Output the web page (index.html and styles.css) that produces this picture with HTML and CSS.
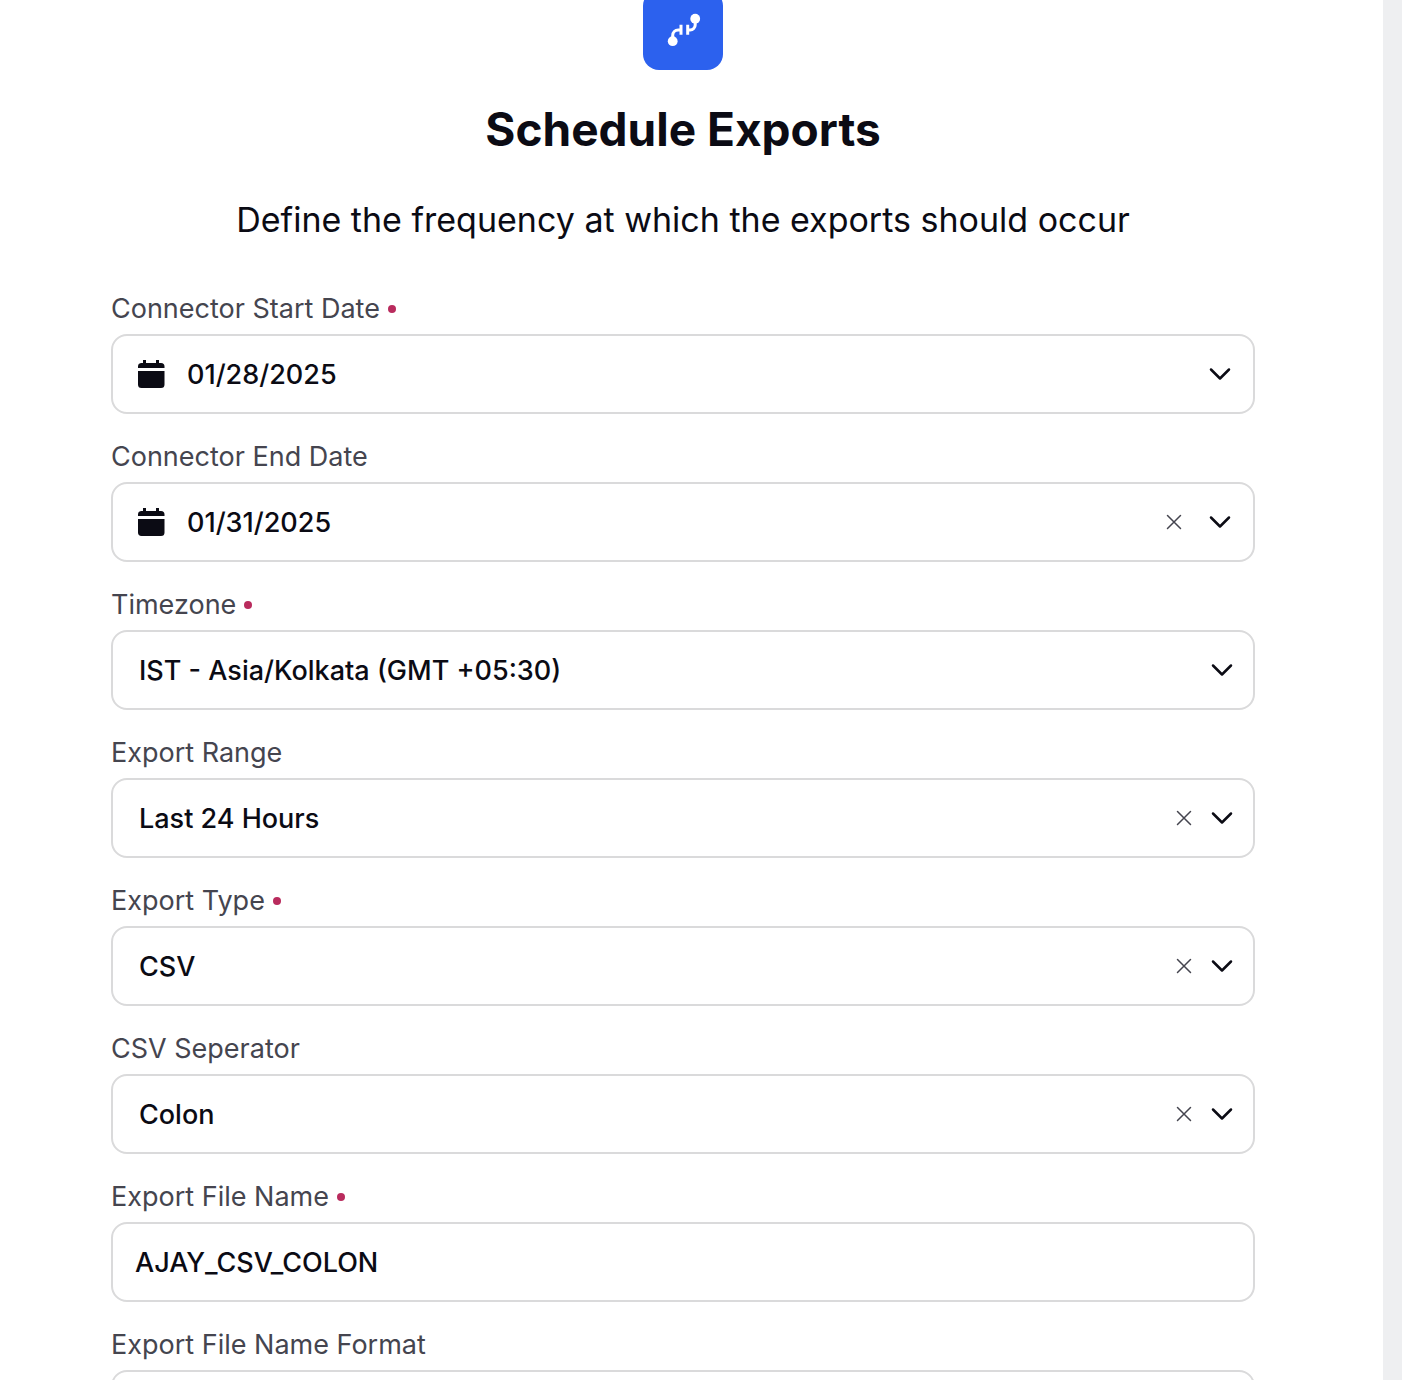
FILE: index.html
```html
<!DOCTYPE html>
<html lang="en">
<head>
  <meta charset="UTF-8" />
  <title>Schedule Exports</title>
  <meta name="viewport" content="width=device-width,initial-scale=1" />
  <link rel="stylesheet" href="styles.css">
</head>
<body>
  <svg class="sprite" aria-hidden="true">
    <symbol id="calendar" viewBox="0 0 28 28">
      <path d="M6 0h3v3h10V0h3v3h2a3.500 3.500 0 0 1 3.500 3.500V8H1V6.500A3.500 3.500 0 0 1 4 3h2z" />
      <path d="M1 11h26.500v13.500A3.500 3.500 0 0 1 24 28H4.500A3.500 3.500 0 0 1 1 24.500z" />
    </symbol>
    <symbol id="chevron" viewBox="0 0 24 24">
      <path d="M3 7.500l9 9 9-9" />
    </symbol>
    <symbol id="close" viewBox="0 0 16 16">
      <path d="M1.500 1.500l13 13M14.500 1.500l-13 13" />
    </symbol>
  </svg>

  <main class="panel">
    <header class="header">
      <svg class="logo" viewBox="0 0 80 80" aria-hidden="true">
        <rect width="80" height="80" rx="16" fill="#2c61ee" />
        <g fill="none" stroke="#fff" stroke-width="3">
          <path d="M29.700 51v-5.500a5.500 5.500 0 0 1 5.500-5.500H38M38 34.700v10M44.700 34.700v10M44.700 40h2.500a5 5 0 0 0 5-5V29" />
        </g>
        <circle cx="29.700" cy="51.200" r="4.900" fill="#fff" />
        <circle cx="52.200" cy="28.700" r="4.900" fill="#fff" />
      </svg>
      <h1>Schedule Exports</h1>
      <p>Define the frequency at which the exports should occur</p>
    </header>

    <form class="form">
      <div class="field">
        <label class="required" for="startDate">Connector Start Date</label>
        <div class="control date">
          <svg class="calendar" aria-hidden="true"><use href="#calendar" /></svg>
          <input type="text" id="startDate" value="01/28/2025">
          <button type="button" class="open" aria-label="Open calendar"><svg class="chevron"><use href="#chevron" /></svg></button>
        </div>
      </div>

      <div class="field">
        <label for="endDate">Connector End Date</label>
        <div class="control date">
          <svg class="calendar" aria-hidden="true"><use href="#calendar" /></svg>
          <input type="text" id="endDate" value="01/31/2025">
          <button type="button" class="clear" aria-label="Clear"><svg class="close"><use href="#close" /></svg></button>
          <button type="button" class="open" aria-label="Open calendar"><svg class="chevron"><use href="#chevron" /></svg></button>
        </div>
      </div>

      <div class="field">
        <label class="required" for="timezone">Timezone</label>
        <div class="control dropdown">
          <select id="timezone"><option>IST - Asia/Kolkata (GMT +05:30)</option></select>
          <svg class="chevron" aria-hidden="true"><use href="#chevron" /></svg>
        </div>
      </div>

      <div class="field">
        <label for="range">Export Range</label>
        <div class="control dropdown">
          <select id="range"><option>Last 24 Hours</option></select>
          <button type="button" class="clear" aria-label="Clear"><svg class="close"><use href="#close" /></svg></button>
          <svg class="chevron" aria-hidden="true"><use href="#chevron" /></svg>
        </div>
      </div>

      <div class="field">
        <label class="required" for="type">Export Type</label>
        <div class="control dropdown">
          <select id="type"><option>CSV</option></select>
          <button type="button" class="clear" aria-label="Clear"><svg class="close"><use href="#close" /></svg></button>
          <svg class="chevron" aria-hidden="true"><use href="#chevron" /></svg>
        </div>
      </div>

      <div class="field">
        <label for="separator">CSV Seperator</label>
        <div class="control dropdown">
          <select id="separator"><option>Colon</option></select>
          <button type="button" class="clear" aria-label="Clear"><svg class="close"><use href="#close" /></svg></button>
          <svg class="chevron" aria-hidden="true"><use href="#chevron" /></svg>
        </div>
      </div>

      <div class="field">
        <label class="required" for="fileName">Export File Name</label>
        <div class="control">
          <input type="text" id="fileName" value="AJAY_CSV_COLON">
        </div>
      </div>

      <div class="field">
        <label for="fileFormat">Export File Name Format</label>
        <div class="control">
          <input type="text" id="fileFormat">
        </div>
      </div>
    </form>
  </main>
</body>
</html>
```

FILE: styles.css
```css
* {
  box-sizing: border-box;
}
html {
  height: 100%;
  overflow: hidden;
}
body {
  margin: 0;
  height: 100%;
  overflow: hidden;
  padding-right: 19px;
  background: #eeeff1;
  color: #0b0b14;
  font-family: Inter, "Liberation Sans", sans-serif;
  font-size: 27px;
}
.sprite {
  display: none;
}
.panel {
  height: 100%;
  overflow: hidden;
  padding: 0 128px 0 111px;
  background: #fff;
}
.header {
  display: flex;
  flex-direction: column;
  align-items: center;
  /* the top of the logo is scrolled out of view */
  margin-top: -10px;
  text-align: center;
}
.logo {
  width: 80px;
  height: 80px;
}
h1 {
  margin: 28px 0 0;
  font-size: 46px;
  font-weight: 700;
  line-height: 62px;
}
.header p {
  margin: 34px 0 0;
  font-size: 34px;
  line-height: 52px;
}
.form {
  display: flex;
  flex-direction: column;
  gap: 24px;
  margin-top: 44px;
}
.field {
  display: flex;
  flex-direction: column;
  gap: 6px;
}
label {
  display: flex;
  align-items: center;
  gap: 8px;
  line-height: 38px;
  color: #45454f;
}
.required::after {
  content: "";
  width: 8px;
  height: 8px;
  border-radius: 50%;
  background: #b92b5d;
}
.control {
  display: flex;
  align-items: center;
  height: 80px;
  padding: 0 22px;
  border: 2px solid #dadadb;
  border-radius: 16px;
}
.date {
  padding: 0 21px 0 24px;
}
.dropdown {
  padding: 0 19px 0 26px;
}
input, select {
  flex: 1;
  min-width: 0;
  height: 100%;
  padding: 0;
  border: 0;
  outline: 0;
  appearance: none;
  background: none;
  color: inherit;
  font: inherit;
  font-weight: 500;
}
button {
  display: flex;
  padding: 0;
  border: 0;
  background: none;
  color: inherit;
}
.calendar {
  width: 28px;
  height: 28px;
  margin-right: 22px;
  fill: currentColor;
}
.chevron {
  width: 24px;
  height: 24px;
  fill: none;
  stroke: currentColor;
  stroke-width: 2.5;
  stroke-linecap: round;
  stroke-linejoin: round;
}
.close {
  width: 16px;
  height: 16px;
  fill: none;
  stroke: #45454f;
  stroke-width: 1.5;
  stroke-linecap: round;
}
.date .clear {
  margin-right: 26px;
}
.dropdown .clear {
  margin-right: 18px;
}
```
